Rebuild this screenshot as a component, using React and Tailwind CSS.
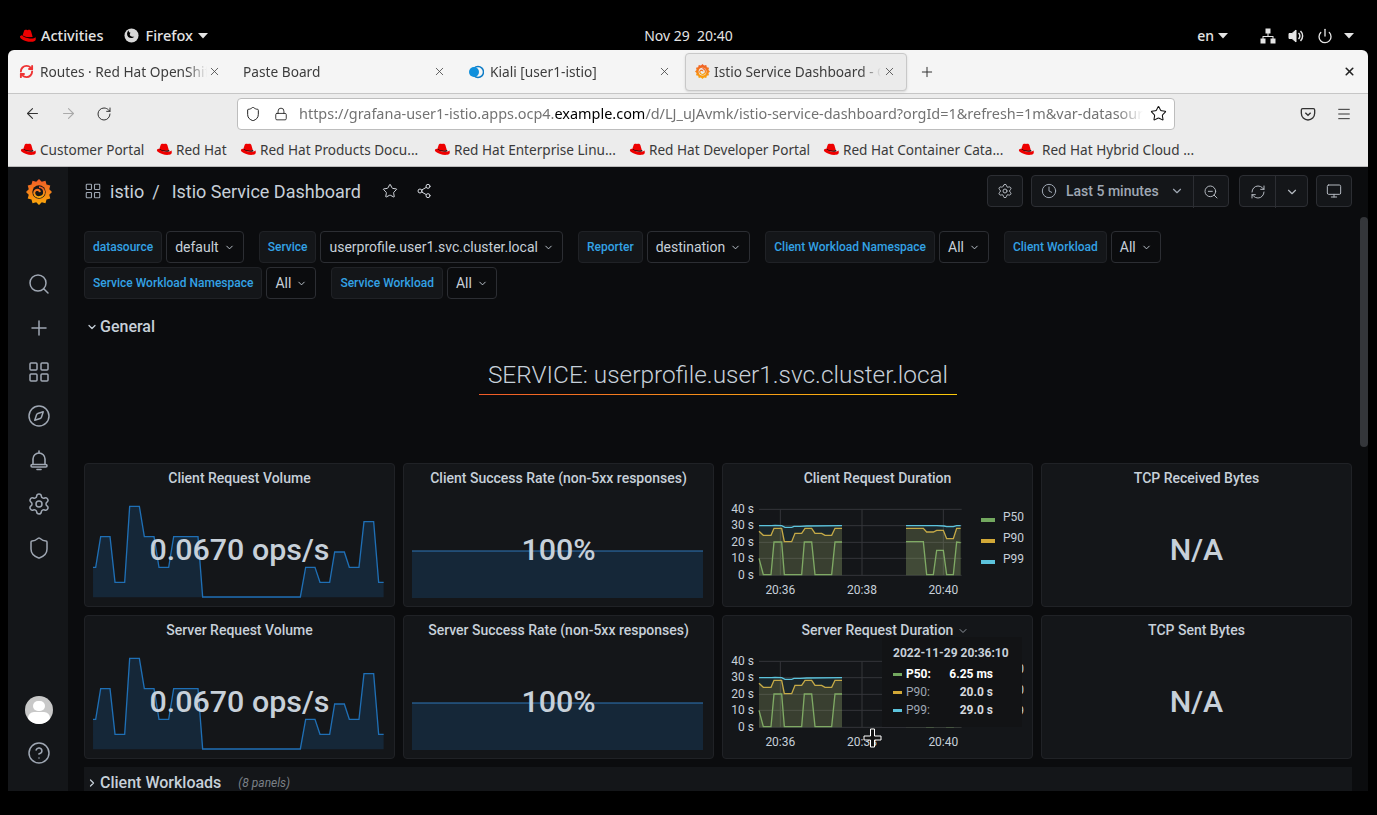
import React from 'react';
import {
  ArrowLeft, ArrowRight, ChevronDown, ChevronRight, CircleHelp, Clock, Compass, LayoutGrid, Lock, Menu, Monitor,
  Plus, Power, RefreshCw, RotateCw, Search, Settings, Share2, Shield, Star, X, ZoomOut,
} from 'lucide-react';

const volumeLine = [
  [39, 323], [47, 323], [62, 231], [90, 231], [105, 368], [134, 368], [149, 140], [178, 140], [193, 231], [222, 231],
  [237, 323], [266, 323], [281, 231], [354, 231], [368, 412], [661, 412], [677, 323], [705, 323], [720, 368], [749, 368],
  [764, 277], [793, 277], [808, 323], [837, 323], [852, 186], [881, 186], [896, 368], [911, 368],
];

const series = [
  {
    name: 'P50',
    color: '#73a85f',
    fill: 0.12,
    parts: [
      [[117, 295], [130, 344], [153, 344], [162, 246], [185, 246], [193, 344], [245, 344], [253, 246], [275, 246], [285, 344], [335, 344], [345, 246], [366, 246]],
      [[558, 245], [610, 245], [620, 344], [640, 344], [650, 271], [670, 271], [680, 344], [700, 344], [710, 246], [722, 248]],
    ],
  },
  {
    name: 'P90',
    color: '#d2a837',
    fill: 0.18,
    parts: [
      [[117, 214], [130, 226], [153, 226], [162, 205], [185, 205], [193, 245], [215, 245], [225, 220], [245, 220], [255, 205], [275, 205], [285, 220], [305, 220], [315, 226], [335, 226], [345, 205], [366, 205]],
      [[558, 205], [610, 205], [620, 216], [640, 216], [650, 211], [670, 211], [680, 236], [700, 236], [710, 205], [722, 205]],
    ],
  },
  {
    name: 'P99',
    color: '#5cc3dc',
    fill: 0.1,
    parts: [
      [[117, 197], [155, 197], [165, 196], [185, 197], [195, 202], [215, 202], [222, 199], [240, 199], [260, 198], [366, 197]],
      [[558, 197], [650, 197], [672, 198], [680, 200], [700, 200], [710, 197], [722, 197]],
    ],
  },
];

const toPoints = (pts) => pts.map((p) => p.join(',')).join(' ');
const toArea = (pts, bottom) => `${pts[0][0]},${bottom} ${toPoints(pts)} ${pts[pts.length - 1][0]},${bottom}`;

const gearPoints = Array.from({ length: 24 }, (_, i) => {
  const r = i % 2 === 0 ? 12 : 9.8;
  const a = (i * Math.PI) / 12;
  return `${(12 + r * Math.cos(a)).toFixed(2)},${(12 + r * Math.sin(a)).toFixed(2)}`;
}).join(' ');

const GrafanaLogo = ({ size = 26, id = 'gf', hole = '#141619' }) => (
  <svg width={size} height={size} viewBox="0 0 24 24">
    <defs>
      <linearGradient id={id} x1="0" y1="0" x2="0" y2="1">
        <stop offset="0" stopColor="#f05a28" />
        <stop offset="1" stopColor="#fbaa0a" />
      </linearGradient>
    </defs>
    <polygon points={gearPoints} fill={`url(#${id})`} />
    <circle cx="12" cy="12" r="6.2" fill={hole} />
    <path d="M12 7.5a4.6 4.6 0 1 1-4.4 5.6 3 3 0 0 1 3-3.2 2.3 2.3 0 0 1 2.2 2.2" fill="none" stroke={`url(#${id})`} strokeWidth="1.8" />
  </svg>
);

const Hat = ({ size = 16, band = '#000' }) => (
  <svg width={size} height={size} viewBox="1 2 22 20" className="shrink-0">
    <path d="M7.5 6.2c1-2 2.8-1.6 4.5-1 2-.9 3.8-.6 4.6 1.3l2.1 7.3c-3.6 1.6-10 .9-13.2-1.6z" fill="#e00" />
    <path d="M5.8 11.6c3 2.6 9.4 3.4 13.2 1.9l.5 1.5c-4 1.5-10.5.6-14.3-2z" fill={band} />
    <path d="M4.8 11.6C2 12.2 1.4 14 3.4 15.8c4 3.4 11 5 15.6 4.2 3.6-.6 4.6-3 3-6.2-.2 1.6-3.4 2.4-7 2-4.2-.4-8-2-10.2-4.2z" fill="#e00" />
  </svg>
);

const Caret = ({ className = '' }) => (
  <svg width="10" height="6" viewBox="0 0 10 6" className={className}>
    <polygon points="0,0 10,0 5,5.5" fill="currentColor" />
  </svg>
);

const GrafanaBell = ({ size = 24 }) => (
  <svg width={size} height={size} viewBox="0 0 24 24" fill="none" stroke="currentColor" strokeWidth="1.6" strokeLinecap="round">
    <path d="M12 3v2" />
    <path d="M6 16.5V11a6 6 0 0 1 12 0v5.5" />
    <rect x="4" y="16.5" width="16" height="2.5" rx="1.2" />
    <path d="M10 21.5h4" />
  </svg>
);

const Tab = ({ icon, title, active }) => (
  <div className={`relative flex items-center shrink-0 rounded h-[38px] ${active ? 'w-[222px] bg-[#ebebeb] border border-[#c8c8c8] shadow-sm pl-[8px]' : 'w-[225px] pl-[10px]'}`}>
    {icon && <div className={`w-[16px] flex justify-center shrink-0 ${active ? 'mr-[4px]' : 'mr-[6px]'}`}>{icon}</div>}
    <span className="pt-[2px] w-[167px] whitespace-nowrap overflow-hidden text-[13.7px] text-[#3d3d3d] [mask-image:linear-gradient(to_right,black_88%,transparent)]">{title}</span>
    <X size={13} strokeWidth={1.5} className={`absolute text-[#444] ${active ? 'right-[10px]' : 'right-[12px]'}`} />
  </div>
);

const bookmarks = [
  ['Customer Portal', 'w-[136px]'],
  ['Red Hat', 'w-[84px]'],
  ['Red Hat Products Docu...', 'w-[194px]'],
  ['Red Hat Enterprise Linu...', 'w-[195px]'],
  ['Red Hat Developer Portal', 'w-[194px]'],
  ['Red Hat Container Cata...', 'w-[195px]'],
];

const TopBar = () => (
  <div className="h-[50px] pt-[21px] bg-black text-[#e4e4e4] text-[14.5px] font-['Noto_Sans',sans-serif] font-medium grid grid-cols-[1fr_auto_1fr] items-center">
    <div className="flex items-center pl-[19px]">
      <Hat size={17} band="#000" />
      <span className="ml-[5px]">Activities</span>
      <svg width="15" height="15" viewBox="0 0 16 16" className="ml-[21px]">
        <circle cx="8" cy="8" r="7.5" fill="#d8d8d8" />
        <path d="M5 2.5c-2 2-2.5 5-.5 7 2 1.8 5 1.5 6.5-.5-1 .5-3 .5-4-.5-1.2-1.2-1-2.8 0-3.5-1.5 0-2.2-1-2-2.5z" fill="#000" />
      </svg>
      <span className="ml-[6px]">Firefox</span>
      <Caret className="ml-[5px]" />
    </div>
    <div className="font-normal text-[14px]">Nov 29&nbsp;&nbsp;20:40</div>
    <div className="flex items-center justify-end pr-[23px] text-[14px]">
      <span>en</span>
      <Caret className="ml-[4px] mr-[32px]" />
      <svg width="16" height="16" viewBox="0 0 16 16" className="mr-[12px]" fill="#e4e4e4">
        <rect x="5.5" y="0.5" width="5" height="5" />
        <rect x="0.5" y="10.5" width="5" height="5" />
        <rect x="10.5" y="10.5" width="5" height="5" />
        <path d="M7.5 5h1v3h5v3h-1V9h-9v2h-1V8h5z" />
      </svg>
      <svg width="17" height="16" viewBox="0 0 17 16" className="mr-[12px]" fill="none" stroke="#e4e4e4">
        <path d="M1 5.5h3L8 2v12l-4-3.5H1z" fill="#e4e4e4" />
        <path d="M10.5 5a4 4 0 0 1 0 6M12.5 3a7 7 0 0 1 0 10" strokeWidth="1.5" />
      </svg>
      <Power size={16} strokeWidth={2} />
      <Caret className="ml-[11px]" />
    </div>
  </div>
);

const Browser = () => (
  <div className="font-['Noto_Sans',sans-serif] text-[#333]">
    <div className="h-[44px] bg-[#f5f5f5] rounded-t-md border-b border-[#c6c6c6] flex items-center">
      <Tab title="Routes · Red Hat OpenShift" icon={<RefreshCw size={15} strokeWidth={3} className="text-[#e33]" />} />
      <Tab title="Paste Board" />
      <Tab title="Kiali [user1-istio]" icon={
        <svg width="16" height="16" viewBox="0 0 16 16">
          <circle cx="10" cy="8" r="5.5" fill="none" stroke="#0f7cc6" strokeWidth="1.5" />
          <circle cx="6" cy="8" r="5" fill="#0f8fdc" />
        </svg>
      } />
      <div className="ml-[2px]">
        <Tab active title="Istio Service Dashboard - Grafana" icon={<GrafanaLogo size={15} id="gftab" hole="#ebebeb" />} />
      </div>
      <Plus size={16} strokeWidth={1.5} className="ml-[12px] text-[#333]" />
      <X size={13} strokeWidth={3} className="ml-auto mr-[12px] text-[#222]" />
    </div>
    <div className="h-[39px] bg-[#ececec] flex items-center">
      <ArrowLeft size={17} strokeWidth={1.5} className="ml-[16px] text-[#333]" />
      <ArrowRight size={17} strokeWidth={1.5} className="ml-[19px] text-[#aaa]" />
      <RotateCw size={16} strokeWidth={1.5} className="ml-[19px] text-[#333]" />
      <div className="ml-[125px] w-[938px] h-[32px] bg-white border border-[#bdbdbd] rounded flex items-center">
        <Shield size={16} strokeWidth={1.5} className="ml-[7px] text-[#222]" />
        <Lock size={14} strokeWidth={1.5} className="ml-[13px] text-[#222]" />
        <span className="ml-[11px] w-[844px] whitespace-nowrap overflow-hidden text-[14.45px] text-[#737373] [mask-image:linear-gradient(to_right,black_97%,transparent)]">
          https://grafana-user1-istio.apps.ocp4.<span className="text-black">example.com</span>/d/LJ_uJAvmk/istio-service-dashboard?orgId=1&amp;refresh=1m&amp;var-datasource=default
        </span>
        <Star size={17} strokeWidth={1.5} className="ml-[7px] text-[#111]" />
      </div>
      <svg width="16" height="16" viewBox="0 0 24 24" fill="none" stroke="#333" strokeWidth="2" className="ml-[125px]">
        <path d="M4 4h16a2 2 0 0 1 2 2v5a10 10 0 0 1-20 0V6a2 2 0 0 1 2-2z" />
        <path d="M8 10l4 4 4-4" />
      </svg>
      <Menu size={16} strokeWidth={1.5} className="ml-[20px] text-[#333]" />
    </div>
    <div className="h-[34px] bg-[#ececec] border-b border-[#bbb] flex items-center pl-[12px] text-[13.6px] text-[#3a3a3a]">
      {bookmarks.map(([label, width]) => (
        <div key={label} className={`flex items-center gap-[4px] whitespace-nowrap ${width}`}>
          <Hat size={16} />
          <span className="pt-[2px]">{label}</span>
        </div>
      ))}
      <div className="flex items-center gap-[8px] whitespace-nowrap">
        <Hat size={16} />
        <span className="pt-[2px]">Red Hat Hybrid Cloud ...</span>
      </div>
    </div>
  </div>
);

const Sidebar = () => (
  <div className="w-[60px] shrink-0 bg-[#141619] flex flex-col items-center text-[#9fa7b3] pl-[2px] pt-[12px] pb-[26px]">
    <GrafanaLogo id="gfside" />
    <div className="mt-[67px] flex flex-col gap-[20px]">
      <Search size={24} strokeWidth={1.5} />
      <Plus size={24} strokeWidth={1.5} />
      <LayoutGrid size={24} strokeWidth={1.5} />
      <Compass size={24} strokeWidth={1.5} />
      <GrafanaBell />
      <Settings size={24} strokeWidth={1.5} />
      <Shield size={24} strokeWidth={1.5} />
    </div>
    <div className="mt-auto w-[28px] h-[28px] rounded-full bg-[#c8c8c8] overflow-hidden flex flex-col items-center">
      <div className="mt-[5px] w-[12px] h-[12px] rounded-full bg-white" />
      <div className="mt-[1px] w-[22px] h-[14px] rounded-full bg-white" />
    </div>
    <CircleHelp size={24} strokeWidth={1.5} className="mt-[17px]" />
  </div>
);

const ToolButton = ({ children, className = '' }) => (
  <div className={`h-[32px] flex items-center justify-center text-[#b4b9c0] ${className}`}>{children}</div>
);

const DashHeader = () => (
  <div className="h-[50px] pt-[8px] flex items-start pl-[16px] pr-[16px] text-[#c7d0d9]">
    <div className="h-[32px] flex items-center text-[18px] text-[#c7d0d9]">
      <LayoutGrid size={18} strokeWidth={1.5} className="text-[#9fa7b3]" />
      <span className="ml-[8px]">istio</span>
      <span className="ml-[8px]">/</span>
      <span className="ml-[12px]">Istio Service Dashboard</span>
      <Star size={16} strokeWidth={1.5} className="ml-[21px] text-[#d5d9df]" />
      <Share2 size={16} strokeWidth={1.5} className="ml-[18px] text-[#d5d9df]" />
    </div>
    <div className="ml-auto flex gap-[8px]">
      <ToolButton className="w-[36px] bg-[#141619] border border-[#2c2e33] rounded-sm"><Settings size={16} strokeWidth={1.5} /></ToolButton>
      <div className="flex h-[32px] w-[198px] bg-[#141619] border border-[#2c2e33] rounded-sm mr-[2px]">
        <div className="flex-1 flex items-center pl-[9px] text-[14px] font-medium text-[#9fa7b3]">
          <Clock size={16} strokeWidth={1.5} />
          <span className="ml-[9px]">Last 5 minutes</span>
          <ChevronDown size={14} strokeWidth={2} className="ml-[11px]" />
        </div>
        <ToolButton className="w-[35px] border-l border-[#2c2e33] h-[30px]"><ZoomOut size={16} strokeWidth={1.5} /></ToolButton>
      </div>
      <div className="flex h-[32px] w-[69px] bg-[#141619] border border-[#2c2e33] rounded-sm">
        <ToolButton className="w-[35px] h-[30px]"><RefreshCw size={16} strokeWidth={1.5} /></ToolButton>
        <ToolButton className="flex-1 h-[30px] border-l border-[#2c2e33]"><ChevronDown size={14} strokeWidth={2} /></ToolButton>
      </div>
      <ToolButton className="w-[36px] bg-[#141619] border border-[#2c2e33] rounded-sm"><Monitor size={16} strokeWidth={1.5} /></ToolButton>
    </div>
  </div>
);

const variables = [
  ['datasource', 'default'],
  ['Service', 'userprofile.user1.svc.cluster.local'],
  ['Reporter', 'destination'],
  ['Client Workload Namespace', 'All'],
  ['Client Workload', 'All'],
  ['Service Workload Namespace', 'All'],
  ['Service Workload', 'All'],
];

const Filters = () => (
  <div className="mt-[24px] mx-[16px] flex flex-wrap gap-x-[15px] gap-y-[4px]">
    {variables.map(([label, value]) => (
      <div key={label} className="flex gap-[4px] h-[32px]">
        <div className="flex items-center px-[8px] bg-[#141619] border border-[#202226] rounded-sm text-[12px] font-medium text-[#33a2e5] whitespace-nowrap">{label}</div>
        <div className="flex items-center px-[8px] bg-[#0b0c0e] border border-[#2c2e33] rounded-sm text-[14px] text-[#c7d0d9] whitespace-nowrap">
          {value}
          <ChevronDown size={11} strokeWidth={2} className="ml-[5px]" />
        </div>
      </div>
    ))}
  </div>
);

const Sparkline = () => (
  <svg viewBox="39 100 873 314" width="291" height="104.67" className="block">
    <polygon points={toArea(volumeLine, 413)} fill="#152738" />
    <polyline points={toPoints(volumeLine)} fill="none" stroke="#1f6fb5" strokeWidth="4" />
  </svg>
);

const FlatArea = () => (
  <svg viewBox="0 0 291 48" width="291" height="48" className="block">
    <rect x="0" y="1" width="291" height="47" fill="#152738" />
    <line x1="0" y1="1" x2="291" y2="1" stroke="#2f77b8" strokeWidth="1" />
  </svg>
);

const Panel = ({ title, value, chevron, children }) => (
  <div className="relative h-[144px] bg-[#141619] border border-[#202226] rounded-sm flex flex-col items-center">
    <div className="relative pt-[4px] h-[24px] text-[14px] leading-[20px] font-medium text-[#c7d0d9] flex items-center">
      {title}
      {chevron && <ChevronDown size={12} strokeWidth={2} className="absolute left-full ml-[4px] mt-[1px] text-[#8e949c]" />}
    </div>
    <div className="mt-auto self-stretch flex">{children}</div>
    {value && (
      <div className="absolute inset-x-0 top-[66px] text-center text-[30.4px] leading-[40px] font-medium text-[#c7d0d9]">{value}</div>
    )}
  </div>
);

const gridY = [[148, '40 s'], [197, '30 s'], [247, '20 s'], [295, '10 s'], [346, '0 s']];
const gridX = [[181, '20:36'], [426, '20:38'], [670, '20:40']];

const DurationChart = () => (
  <div className="flex pb-[6px]">
    <svg viewBox="9 120 726 300" width="242" height="100" className="block shrink-0">
      {gridY.map(([y, label]) => (
        <g key={label}>
          <line x1="117" x2="725" y1={y} y2={y} stroke="#34363a" strokeWidth="3" />
          <text x="102" y={y} textAnchor="end" dominantBaseline="middle" fontSize="36" fill="#c7d0d9">{label}</text>
        </g>
      ))}
      {gridX.map(([x, label]) => (
        <g key={label}>
          <line x1={x} x2={x} y1="148" y2="346" stroke="#34363a" strokeWidth="3" />
          <text x={x} y="391" textAnchor="middle" dominantBaseline="middle" fontSize="36" fill="#c7d0d9">{label}</text>
        </g>
      ))}
      {series.map((s) => s.parts.map((pts, i) => (
        <g key={`${s.name}-${i}`}>
          <polygon points={toArea(pts, 346)} fill={s.color} fillOpacity={s.fill} />
          <polyline points={toPoints(pts)} fill="none" stroke={s.color} strokeWidth="4" />
        </g>
      )))}
    </svg>
    <div className="ml-[16px] mt-[7px] flex flex-col text-[12px] leading-[21px] text-[#c7d0d9]">
      {series.map((s) => (
        <div key={s.name} className="flex items-center h-[21px]">
          <div className="w-[14px] h-[4px] mt-[5px]" style={{ background: s.color }} />
          <span className="ml-[8px]">{s.name}</span>
        </div>
      ))}
    </div>
  </div>
);

const tooltipRows = [
  ['P50:', '6.25 ms', true, '#73a85f'],
  ['P90:', '20.0 s', false, '#d2a837'],
  ['P99:', '29.0 s', false, '#5cc3dc'],
];

const HoverTooltip = () => (
  <div className="absolute left-[159px] top-[21px] w-[140px] h-[90px] bg-[#121315] pl-[11px] pt-[6px] text-[12px]">
    <div className="font-bold leading-[20px] text-[#c7d0d9]">2022-11-29 20:36:10</div>
    <div className="mt-[2px]">
      {tooltipRows.map(([name, val, bold, color]) => (
        <div key={name} className="flex items-center h-[18px]">
          <div className="w-[9px] h-[3px]" style={{ background: color }} />
          <span className={`ml-[4px] ${bold ? 'font-bold text-white' : 'text-[#9fa7b3]'}`}>{name}</span>
          <span className={`ml-auto mr-[29px] font-bold ${bold ? 'text-white' : 'text-[#d5d9df]'}`}>{val}</span>
        </div>
      ))}
    </div>
  </div>
);

const CrossCursor = () => (
  <svg width="19" height="20" viewBox="0 0 19 20" className="absolute left-[140px] top-[112px]">
    <path d="M7.5 1h4v7H18v4h-6.5v7h-4v-7H1V8h6.5z" fill="#111" stroke="#fff" strokeWidth="1" />
  </svg>
);

const Row = ({ open, title, note, className = '' }) => (
  <div className={`flex items-center text-[16px] font-medium text-[#c7d0d9] ${className}`}>
    {open ? <ChevronDown size={12} strokeWidth={2.5} className="ml-[2px]" /> : <ChevronRight size={12} strokeWidth={2.5} className="ml-[2px]" />}
    <span className="ml-[2px]">{title}</span>
    {note && <span className="ml-[17px] text-[12px] font-normal italic text-[#7b8087]">{note}</span>}
  </div>
);

const Dashboard = () => (
  <div className="relative flex-1 min-w-0 bg-[#0b0c0e] flex flex-col overflow-hidden font-['Roboto',sans-serif]">
    <DashHeader />
    <Filters />
    <Row open title="General" className="mx-[16px] mt-[16px] h-[24px]" />
    <div className="mt-[20px] flex flex-col items-center">
      <div className="w-[478px] text-center text-[24.4px] leading-[32px] font-light text-[#c7d0d9] pb-[3px] border-b border-transparent [border-image:linear-gradient(90deg,#f05a28,#fbca0a)_1]">
        SERVICE: userprofile.user1.svc.cluster.local
      </div>
    </div>
    <div className="mt-[68px] mx-[16px] grid grid-cols-4 gap-[8px]">
      <Panel title="Client Request Volume" value="0.0670 ops/s">
        <div className="px-[8px] pb-[8px]"><Sparkline /></div>
      </Panel>
      <Panel title="Client Success Rate (non-5xx responses)" value="100%">
        <div className="px-[8px] pb-[8px]"><FlatArea /></div>
      </Panel>
      <Panel title="Client Request Duration"><DurationChart /></Panel>
      <Panel title="TCP Received Bytes" value="N/A" />
      <Panel title="Server Request Volume" value="0.0670 ops/s">
        <div className="px-[8px] pb-[8px]"><Sparkline /></div>
      </Panel>
      <Panel title="Server Success Rate (non-5xx responses)" value="100%">
        <div className="px-[8px] pb-[8px]"><FlatArea /></div>
      </Panel>
      <Panel title="Server Request Duration" chevron>
        <DurationChart />
        <HoverTooltip />
        <CrossCursor />
      </Panel>
      <Panel title="TCP Sent Bytes" value="N/A" />
    </div>
    <div className="mt-[8px] mx-[16px] bg-[#141619]">
      <Row title="Client Workloads" note="(8 panels)" className="h-[32px]" />
    </div>
    <div className="absolute right-0 top-[50px] w-[8px] h-[230px] rounded bg-[#34363a]" />
  </div>
);

export default function App() {
  return (
    <div className="w-[1377px] h-[815px] bg-black overflow-hidden">
      <TopBar />
      <div className="ml-[8px] mr-[9px]">
        <Browser />
        <div className="h-[624px] flex">
          <Sidebar />
          <Dashboard />
        </div>
      </div>
    </div>
  );
}
